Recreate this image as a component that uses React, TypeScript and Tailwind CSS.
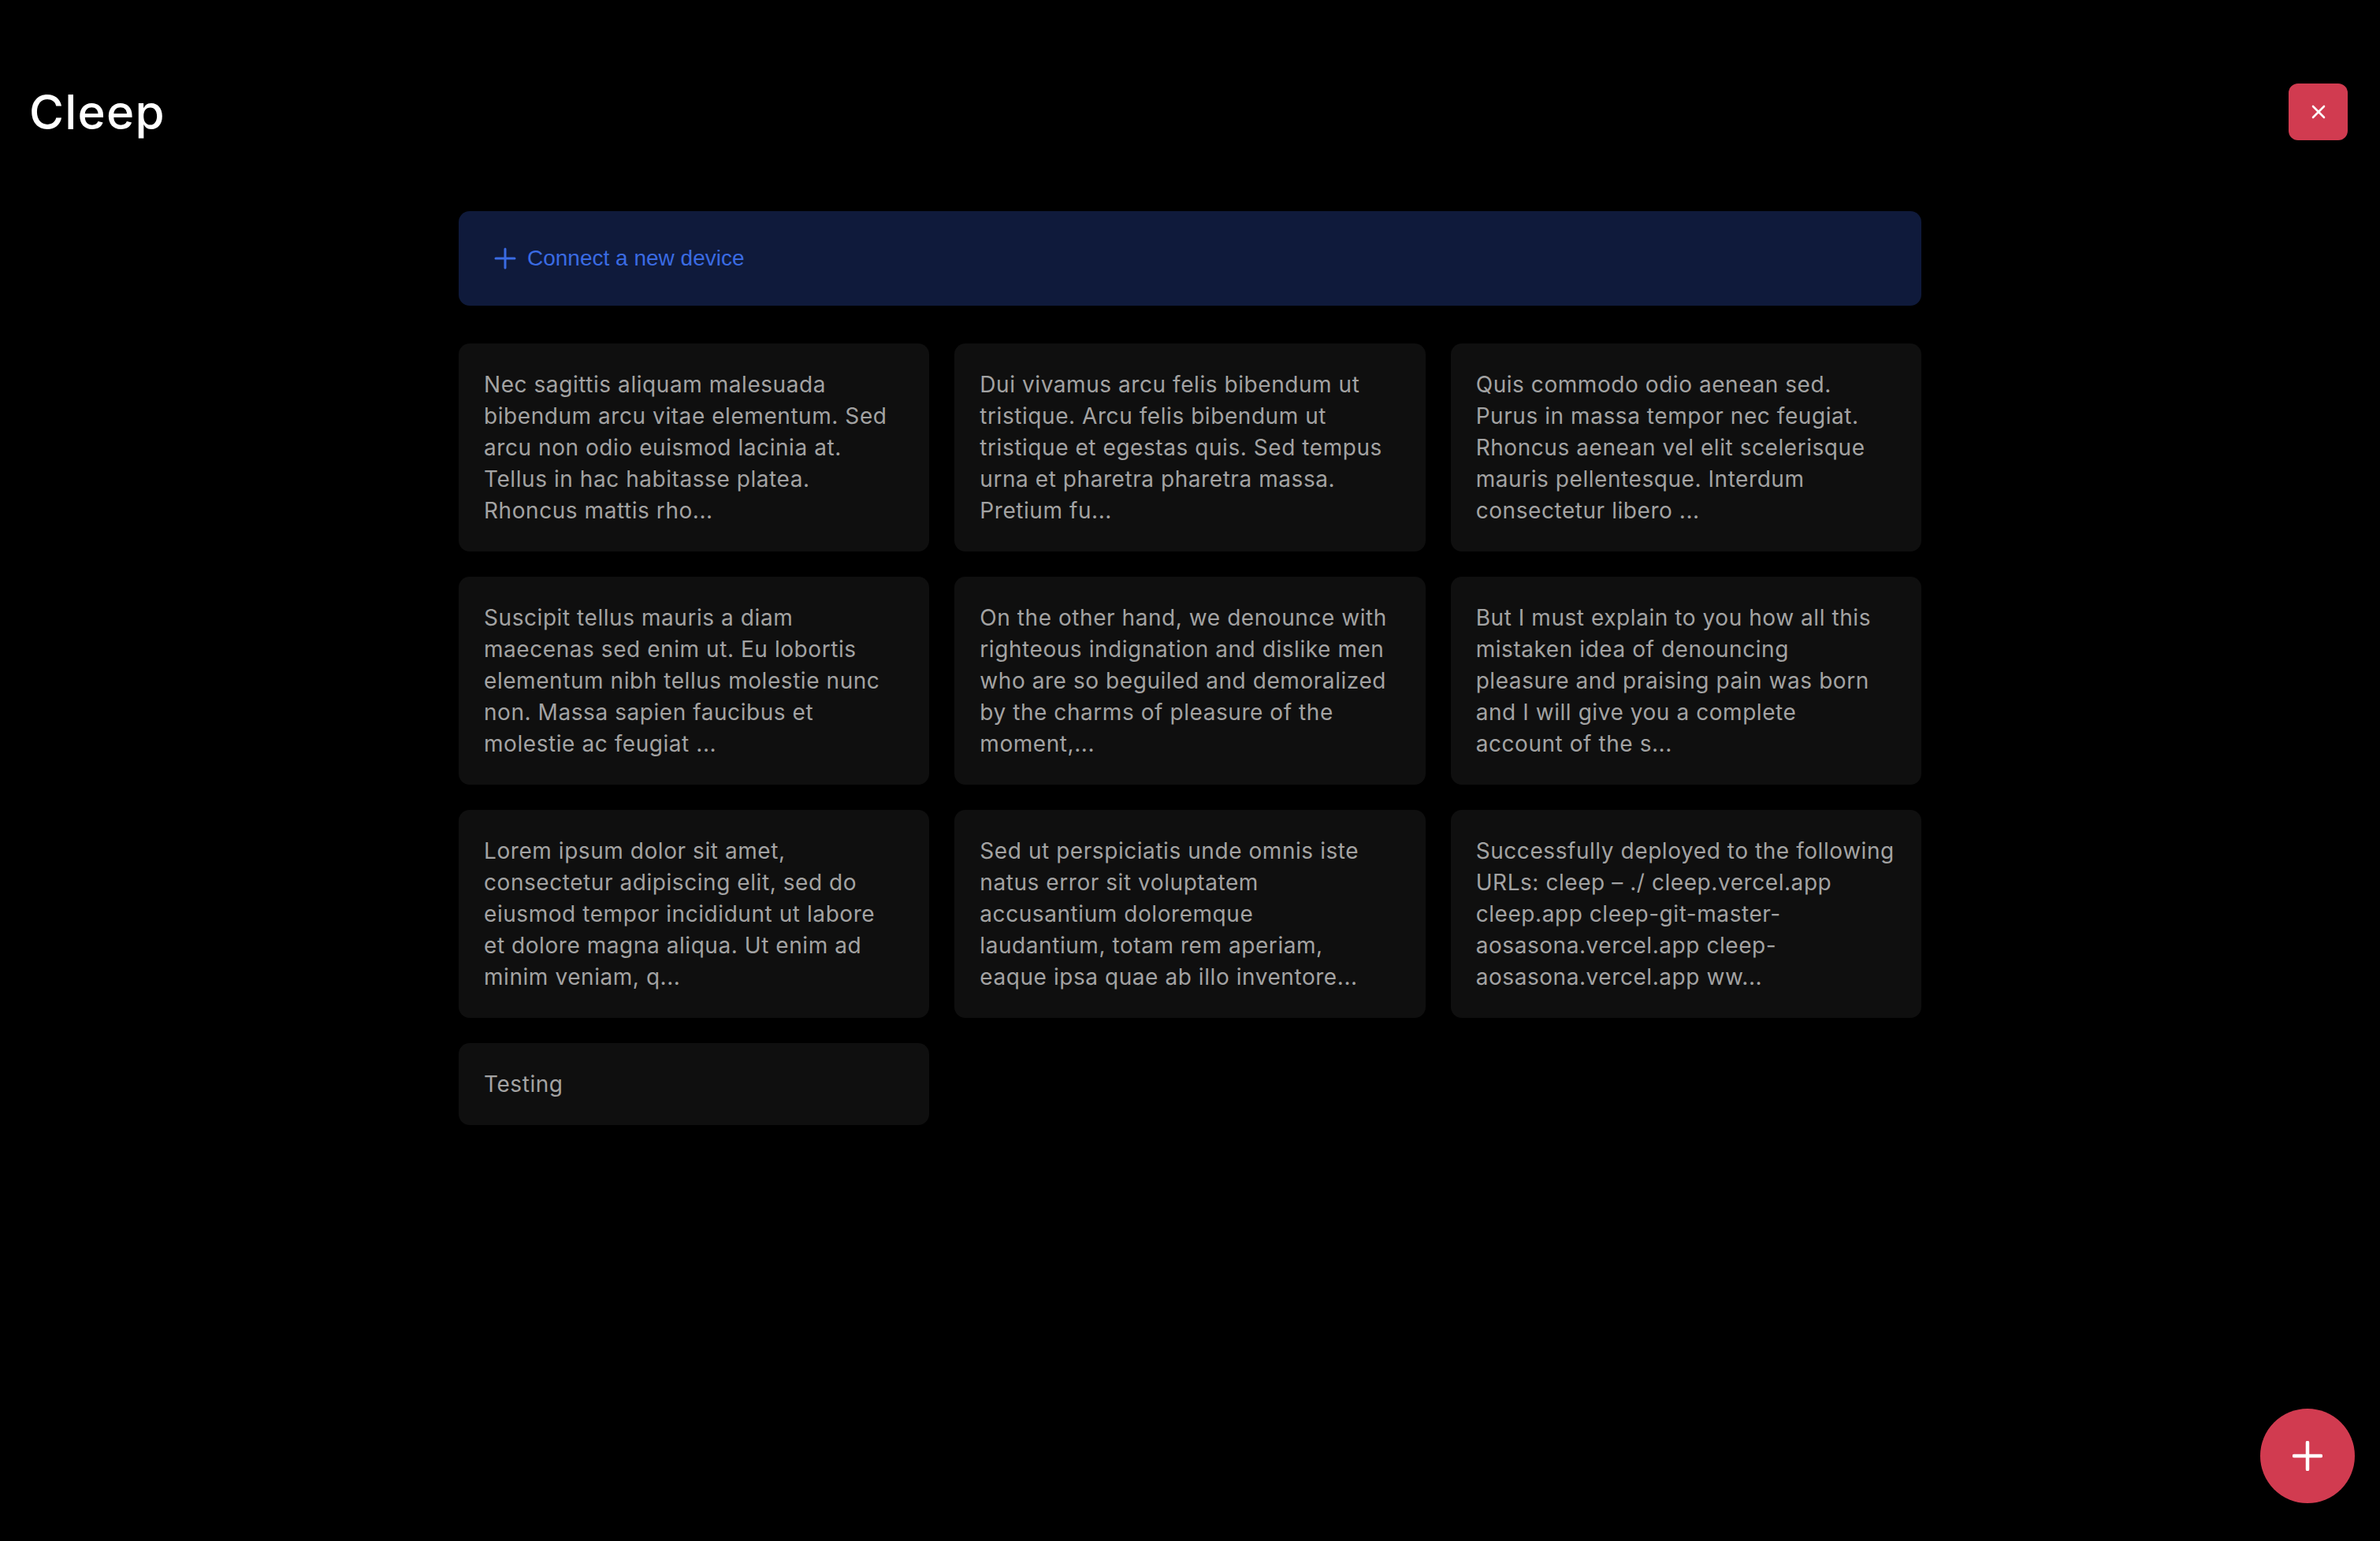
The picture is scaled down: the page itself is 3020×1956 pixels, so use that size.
const notes: string[][] = [
  [
    "Nec sagittis aliquam malesuada",
    "bibendum arcu vitae elementum. Sed",
    "arcu non odio euismod lacinia at.",
    "Tellus in hac habitasse platea.",
    "Rhoncus mattis rho...",
  ],
  [
    "Dui vivamus arcu felis bibendum ut",
    "tristique. Arcu felis bibendum ut",
    "tristique et egestas quis. Sed tempus",
    "urna et pharetra pharetra massa.",
    "Pretium fu...",
  ],
  [
    "Quis commodo odio aenean sed.",
    "Purus in massa tempor nec feugiat.",
    "Rhoncus aenean vel elit scelerisque",
    "mauris pellentesque. Interdum",
    "consectetur libero ...",
  ],
  [
    "Suscipit tellus mauris a diam",
    "maecenas sed enim ut. Eu lobortis",
    "elementum nibh tellus molestie nunc",
    "non. Massa sapien faucibus et",
    "molestie ac feugiat ...",
  ],
  [
    "On the other hand, we denounce with",
    "righteous indignation and dislike men",
    "who are so beguiled and demoralized",
    "by the charms of pleasure of the",
    "moment,...",
  ],
  [
    "But I must explain to you how all this",
    "mistaken idea of denouncing",
    "pleasure and praising pain was born",
    "and I will give you a complete",
    "account of the s...",
  ],
  [
    "Lorem ipsum dolor sit amet,",
    "consectetur adipiscing elit, sed do",
    "eiusmod tempor incididunt ut labore",
    "et dolore magna aliqua. Ut enim ad",
    "minim veniam, q...",
  ],
  [
    "Sed ut perspiciatis unde omnis iste",
    "natus error sit voluptatem",
    "accusantium doloremque",
    "laudantium, totam rem aperiam,",
    "eaque ipsa quae ab illo inventore...",
  ],
  [
    "Successfully deployed to the following",
    "URLs: cleep \u2013 ./ cleep.vercel.app",
    "cleep.app cleep-git-master-",
    "aosasona.vercel.app cleep-",
    "aosasona.vercel.app ww...",
  ],
  ["Testing"],
];

export default function App() {
  return (
    <div className="min-h-screen bg-black font-['Inter',sans-serif]">
      <header className="flex items-center justify-between pl-[37px] pr-[41px] pt-[106px]">
        <h1 className="text-[60px] font-medium leading-none tracking-[0.02em] text-white">
          Cleep
        </h1>
        <button className="flex h-[72px] w-[75px] items-center justify-center rounded-[12px] bg-[#d13b50]">
          <svg width="18" height="18" viewBox="0 0 18 18" fill="none" stroke="white" strokeWidth="2.6" strokeLinecap="round">
            <path d="M2 2L16 16M16 2L2 16" />
          </svg>
        </button>
      </header>

      <main className="mx-auto mt-[90px] w-[1856px]">
        <button className="flex h-[120px] w-full items-center gap-[14px] rounded-[14px] bg-[#0f1a3b] pl-[45px] text-left">
          <svg width="28" height="28" viewBox="0 0 28 28" fill="none" stroke="#3a6be3" strokeWidth="3" strokeLinecap="round">
            <path d="M14 2V26M2 14H26" />
          </svg>
          <span className="font-['Liberation_Sans',Arial,sans-serif] text-[28px] text-[#3a6be3]">
            Connect a new device
          </span>
        </button>

        <div className="mt-[48px] grid grid-cols-3 gap-[32px]">
          {notes.map((lines, i) => (
            <div
              key={i}
              className="rounded-[14px] bg-[#0f0f0f] p-[32px] text-[28px] leading-[40px] tracking-[0.02em] text-[#a3a3a3]"
            >
              {lines.map((l, j) => (
                <div key={j} className="whitespace-nowrap">
                  {l}
                </div>
              ))}
            </div>
          ))}
        </div>
      </main>

      <button className="fixed bottom-[48px] right-[32px] flex h-[120px] w-[120px] items-center justify-center rounded-full bg-[#d13b50]">
        <svg width="38" height="38" viewBox="0 0 38 38" fill="none" stroke="white" strokeWidth="4.5" strokeLinecap="round">
          <path d="M19 2V36M2 19H36" />
        </svg>
      </button>
    </div>
  );
}
